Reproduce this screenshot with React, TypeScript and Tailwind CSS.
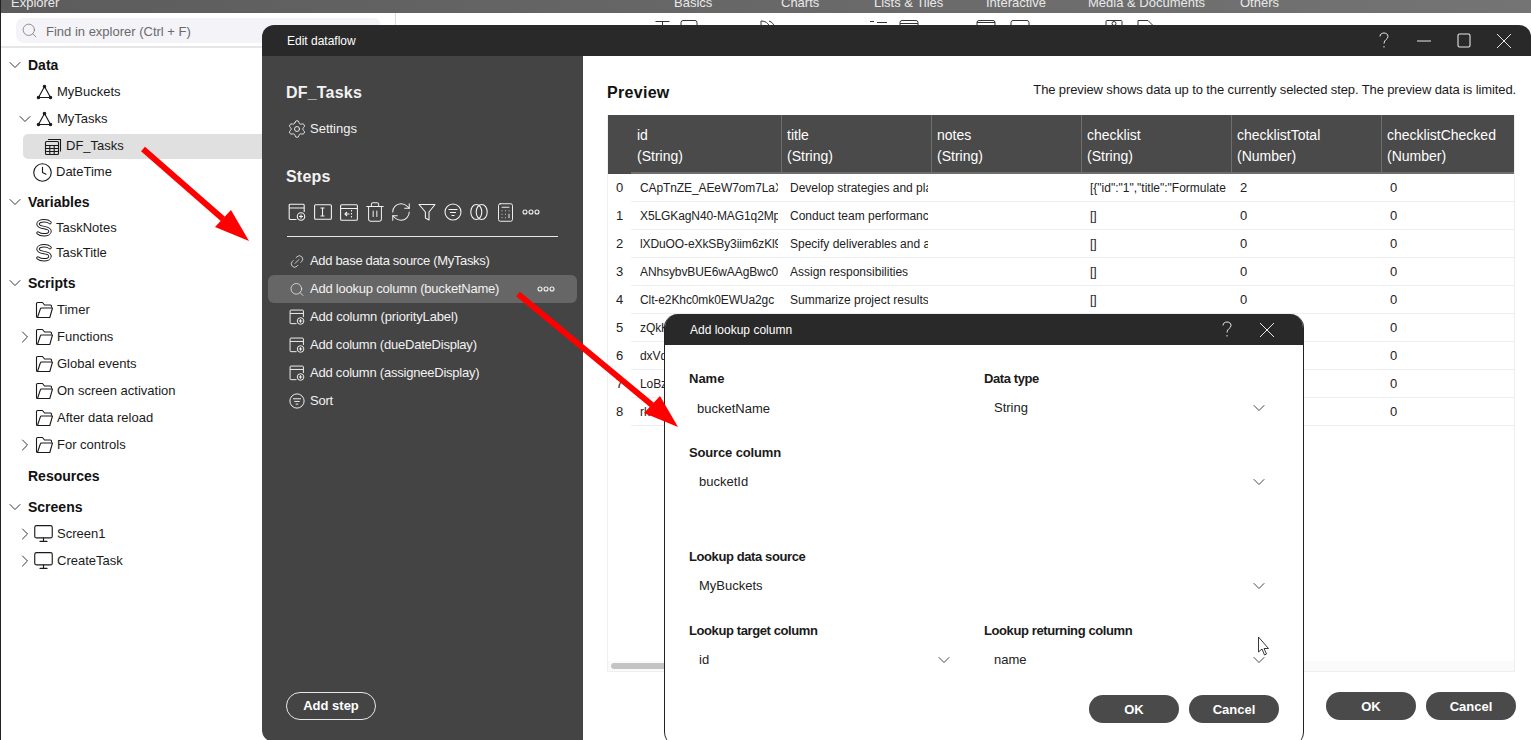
import React from 'react';
import { ChevronDown, ChevronRight, Clock, Monitor, Search, Settings, Link2, Trash2, RefreshCw, Calculator } from 'lucide-react';

const font = { fontFamily: '"Liberation Sans", Arial, sans-serif' };

// --- iconos dibujados a mano ---
const NetworkIcon = () => (
  <svg width="17" height="16" viewBox="0 0 17 16" fill="none" stroke="#1a1a1a" strokeWidth="1.1">
    <path d="M8.5 2.5 2.5 13.5h12z" />
    <circle cx="8.5" cy="2.5" r="1.2" fill="#1a1a1a" />
    <circle cx="2.5" cy="13.5" r="1.2" fill="#1a1a1a" />
    <circle cx="14.5" cy="13.5" r="1.2" fill="#1a1a1a" />
  </svg>
);

const TableIcon = () => (
  <svg width="18" height="18" viewBox="0 0 18 18" fill="none" stroke="#1a1a1a" strokeWidth="1.1">
    <path d="M4 1.5h12.5v12" />
    <rect x="1.5" y="3.5" width="13" height="13" rx="1" />
    <path d="M1.5 7.5h13M1.5 10.5h13M1.5 13.5h13M5.8 7.5v9M10.2 7.5v9" />
  </svg>
);

const VariableIcon = () => (
  <svg width="18" height="18" viewBox="0 0 18 18" fill="none" strokeLinecap="round">
    <path d="M15 3.6C13.6 2.2 11.4 1.8 9 1.8 5.4 1.8 3 3 3 5s2.4 3 6 3.6 6 1.6 6 3.6-2.4 3.6-6 3.6c-2.6 0-4.6-.5-6-1.8" stroke="#1a1a1a" strokeWidth="3.4" />
    <path d="M15 3.6C13.6 2.2 11.4 1.8 9 1.8 5.4 1.8 3 3 3 5s2.4 3 6 3.6 6 1.6 6 3.6-2.4 3.6-6 3.6c-2.6 0-4.6-.5-6-1.8" stroke="#fff" strokeWidth="1.5" />
  </svg>
);

const FolderIcon = () => (
  <svg width="19" height="18" viewBox="0 0 19 18" fill="none" stroke="#1a1a1a" strokeWidth="1.1" strokeLinejoin="round">
    <path d="M2.5 16.5c-.6 0-1-.4-1-1V2.5c0-.6.4-1 1-1h5l2 2.5h6c.6 0 1 .4 1 1v1.5" />
    <path d="M2.5 16.5h12.3L17.5 7H6.5c-.6 0-1 .3-1.2 1z" />
  </svg>
);

const AddColumnIcon = ({ size = 18 }: { size?: number }) => (
  <svg width={size} height={size} viewBox="0 0 18 18" fill="none" stroke="#f2f2f2" strokeWidth="1.1">
    <path d="M8.5 16.5H2.2c-.6 0-1-.4-1-1V2.2c0-.6.4-1 1-1h13c.6 0 1 .4 1 1V9" />
    <path d="M1.2 5h15" />
    <circle cx="13" cy="13.5" r="3.7" />
    <path d="M13 11.5v4M11 13.5h4" />
  </svg>
);

const RenameIcon = () => (
  <svg width="18" height="16" viewBox="0 0 18 16" fill="none" stroke="#f2f2f2" strokeWidth="1.1">
    <rect x="0.6" y="0.8" width="16.8" height="14.4" rx="1" />
    <path d="M6.5 4h4M6.5 12h4M8.5 4v8" />
  </svg>
);

const MoveIcon = () => (
  <svg width="18" height="17" viewBox="0 0 18 17" fill="none" stroke="#f2f2f2" strokeWidth="1.1">
    <rect x="0.6" y="0.8" width="16.8" height="15.4" rx="1" />
    <path d="M0.6 4.5h16.8M11.5 6v1.5M11.5 9v1.5M11.5 12v1.5M9.5 10H5M7 8l-2 2 2 2" />
  </svg>
);

const FunnelIcon = () => (
  <svg width="18" height="18" viewBox="0 0 18 18" fill="none" stroke="#f2f2f2" strokeWidth="1.1" strokeLinejoin="round">
    <path d="M1 1.5h16L11 9v8l-3.600-2V9z" />
  </svg>
);

const SortIcon = ({ size = 18 }: { size?: number }) => (
  <svg width={size} height={size} viewBox="0 0 18 18" fill="none" stroke="#f2f2f2" strokeWidth="1.1">
    <circle cx="9" cy="9" r="8" />
    <path d="M4.500 6.500h9M6 9.500h6M7.500 12.500h3" />
  </svg>
);

const MergeIcon = () => (
  <svg width="18" height="18" viewBox="0 0 18 18" fill="none" stroke="#f2f2f2" strokeWidth="1.1">
    <ellipse cx="6.300" cy="9" rx="5.500" ry="7.500" />
    <ellipse cx="11.700" cy="9" rx="5.500" ry="7.500" />
  </svg>
);

const Dots = () => (
  <svg width="18" height="6" viewBox="0 0 18 6" fill="none" stroke="#f2f2f2" strokeWidth="1.1">
    <circle cx="3" cy="3" r="2" />
    <circle cx="9" cy="3" r="2" />
    <circle cx="15" cy="3" r="2" />
  </svg>
);

const HelpIcon = () => (
  <svg width="10" height="17" viewBox="0 0 10 17" fill="none" stroke="#e8e8e8" strokeWidth="1">
    <path d="M1 4.500C1 2.300 2.700 1 5 1s4 1.300 4 3.400c0 3.100-4 3.100-4 7.100" />
    <path d="M5 14v1.500" />
  </svg>
);

const CloseIcon = () => (
  <svg width="16" height="16" viewBox="0 0 16 16" fill="none" stroke="#e8e8e8" strokeWidth="1">
    <path d="M1 1l14 14M15 1 1 15" />
  </svg>
);

const MinimizeIcon = () => (
  <svg width="14" height="2" viewBox="0 0 14 2" fill="none" stroke="#e8e8e8" strokeWidth="1">
    <path d="M0 1h14" />
  </svg>
);

const MaximizeIcon = () => (
  <svg width="14" height="15" viewBox="0 0 14 15" fill="none" stroke="#e8e8e8" strokeWidth="1.1">
    <rect x="1" y="1" width="12" height="13" rx="1.500" />
  </svg>
);

// --- arbol del explorador ---
const Section = ({ label, open = true, h = 'h-[26px]' }: { label: string; open?: boolean; h?: string }) => (
  <div className={`flex items-center ${h}`}>
    <span className="w-[27px] pl-[4px] shrink-0">
      {open && <ChevronDown size={20} strokeWidth={1.1} color="#222" />}
    </span>
    <span className="text-[14px] font-bold text-[#111]">{label}</span>
  </div>
);

const Item = ({ icon, label, chevron, open, h = 'h-[27px]', pad = 'pl-[34px] gap-[3px]' }: { icon: React.ReactNode; label: string; chevron?: boolean; open?: boolean; h?: string; pad?: string }) => (
  <div className={`relative flex items-center text-[13px] text-[#1a1a1a] ${h} ${pad}`}>
    {chevron && (
      <span className="absolute left-[14px] top-1/2 -translate-y-1/2">
        {open ? <ChevronDown size={20} strokeWidth={1.1} color="#222" /> : <ChevronRight size={20} strokeWidth={1.1} color="#222" />}
      </span>
    )}
    {icon}
    <span>{label}</span>
  </div>
);

const Sidebar = () => (
  <aside className="w-[396px] shrink-0 border-r border-[#dcdcdc] border-l border-l-[#222] flex flex-col">
    <div className="h-[35px] shrink-0 border-b-2 border-[#e6e6e6] pl-[15px] pr-[14px] pt-[5px]">
      <div className="h-[25px] bg-[#f3f3f8] rounded-[8px] flex items-center pl-[5px] gap-[8px] text-[13px] text-[#6a6a6a]">
        <Search size={17} strokeWidth={1.1} color="#777" />
        <span className="pt-[2px]">Find in explorer (Ctrl + F)</span>
      </div>
    </div>
    <div className="pt-[4px]">
      <Section label="Data" />
      <Item icon={<NetworkIcon />} label="MyBuckets" h="h-[26px] mt-px" pad="pl-[35px] gap-[4px]" />
      <Item icon={<NetworkIcon />} label="MyTasks" chevron open pad="pl-[35px] gap-[4px]" />
      <div className="ml-[22px] h-[25px] mt-[2px] bg-[#e0e0e0] rounded-l-[5px] flex items-center pl-[21px] gap-[4px] text-[13px] text-[#1a1a1a]">
        <TableIcon />
        <span className="pb-px">DF_Tasks</span>
      </div>
      <Item icon={<Clock size={21} strokeWidth={1.3} color="#1a1a1a" />} label="DateTime" pad="pl-[31px] gap-[3px]" h="h-[26px]" />
      <Section label="Variables" h="h-[26px] mt-[4px]" />
      <Item icon={<VariableIcon />} label="TaskNotes" h="h-[25px]" pad="pl-[34px] gap-[3px]" />
      <Item icon={<VariableIcon />} label="TaskTitle" h="h-[25px]" pad="pl-[34px] gap-[3px]" />
      <Section label="Scripts" h="h-[26px] mt-[5px]" />
      <Item icon={<FolderIcon />} label="Timer" pad="pl-[34px] gap-[3px]" />
      <Item icon={<FolderIcon />} label="Functions" chevron />
      <Item icon={<FolderIcon />} label="Global events" />
      <Item icon={<FolderIcon />} label="On screen activation" />
      <Item icon={<FolderIcon />} label="After data reload" />
      <Item icon={<FolderIcon />} label="For controls" chevron />
      <Section label="Resources" open={false} h="h-[26px] mt-[5px]" />
      <Section label="Screens" h="h-[26px] mt-[5px]" />
      <Item icon={<Monitor size={21} strokeWidth={1.3} color="#1a1a1a" />} label="Screen1" chevron pad="pl-[32px] gap-[3px]" />
      <Item icon={<Monitor size={21} strokeWidth={1.3} color="#1a1a1a" />} label="CreateTask" chevron pad="pl-[32px] gap-[3px]" />
    </div>
  </aside>
);

// --- barra superior ---
const TopBar = () => (
  <div className="h-[13px] shrink-0 overflow-hidden bg-gradient-to-r from-[#5c5c5c] to-[#747474] text-[13px] text-[#e9e9e9] border-l border-[#222]">
    <div className="flex h-[20px] -mt-[7px] items-center">
      <span className="ml-[10px] w-[663px]">Explorer</span>
      <span className="w-[107px]">Basics</span>
      <span className="w-[93px]">Charts</span>
      <span className="w-[112px]">Lists &amp; Tiles</span>
      <span className="w-[102px]">Interactive</span>
      <span className="w-[152px]">Media &amp; Documents</span>
      <span>Others</span>
    </div>
  </div>
);

const Ribbon = () => (
  <div className="flex-1 overflow-hidden">
    <div className="flex pl-[259px] pt-[7px] gap-[6px]">
      <svg width="500" height="18" viewBox="0 0 500 18" fill="none" stroke="#333" strokeWidth="1">
        <path d="M0.500 1.500h14M7.500 1.500v14" />
        <rect x="26" y="0.500" width="16" height="16" rx="2" />
        <path d="M106 16V1c6 0 9 4 9 9" />
        <path d="M114 1c3 1 5 3 5 6" />
        <path d="M215 1.500h4M222 2.500h10" />
        <rect x="245" y="0.500" width="18" height="16" rx="2" />
        <path d="M245 3.500h18" />
        <rect x="322" y="0.500" width="18" height="16" rx="2" />
        <path d="M322 2.500h18" />
        <rect x="356" y="0.500" width="18" height="16" rx="2" />
        <rect x="451" y="0.500" width="16" height="16" rx="1" />
        <circle cx="459" cy="3.500" r="2" />
        <path d="M483 16V0.500h10l5 5v10" />
      </svg>
    </div>
  </div>
);

// --- tabla de vista previa ---
const columns = [
  ['id', '(String)'],
  ['title', '(String)'],
  ['notes', '(String)'],
  ['checklist', '(String)'],
  ['checklistTotal', '(Number)'],
  ['checklistChecked', '(Number)'],
];

const rows = [
  ['CApTnZE_AEeW7om7LaX', 'Develop strategies and plans', '[{"id":"1","title":"Formulate', '2'],
  ['X5LGKagN40-MAG1q2MpQ', 'Conduct team performance', '[]', '0'],
  ['lXDuOO-eXkSBy3iim6zKl9', 'Specify deliverables and a', '[]', '0'],
  ['ANhsybvBUE6wAAgBwc0Q', 'Assign responsibilities', '[]', '0'],
  ['Clt-e2Khc0mk0EWUa2gc', 'Summarize project results', '[]', '0'],
  ['zQkKagN40', 'Create project plan', '[]', '0'],
  ['dxVdOO', 'Define goals', '[]', '0'],
  ['LoBzyb', 'Review budget', '[]', '0'],
  ['rkE2Kh', 'Schedule meeting', '[]', '0'],
];

const Cell = ({ children }: { children?: React.ReactNode }) => (
  <div className="h-[28px] border-b border-[#eeeeee] flex items-center pl-[9px] pr-[3px] overflow-hidden whitespace-nowrap">
    <span className="overflow-hidden">{children}</span>
  </div>
);

const PreviewTable = () => (
  <div className="w-[908px] h-[557px] border-x border-b border-[#efefef] flex flex-col overflow-hidden">
    <div className="grid grid-cols-[23px_150px_150px_150px_150px_150px_150px] h-[59px] bg-[#4a4a4a] text-white text-[14px] leading-[21px] shrink-0">
      <div />
      {columns.map(([name, type], i) => (
        <div key={name} className={`border-b-2 border-b-[#6e6e6e] pt-[10px] whitespace-nowrap ${i === 0 ? 'pl-[6px]' : 'border-l border-[#6e6e6e] pl-[5px]'}`}>
          <div>{name}</div>
          <div>{type}</div>
        </div>
      ))}
    </div>
    <div className="flex-1 text-[12px] text-[#222]">
      {rows.map((r, i) => (
        <div key={i} className="grid grid-cols-[23px_150px_150px_150px_150px_150px_150px]">
          <div className="h-[28px] flex items-center justify-center text-[13px]">{i}</div>
          <Cell><span className="tracking-[-0.1px]">{r[0]}</span></Cell>
          <Cell>{r[1]}</Cell>
          <Cell />
          <Cell>{r[2]}</Cell>
          <Cell><span className="text-[13px]">{r[3]}</span></Cell>
          <Cell><span className="text-[13px]">0</span></Cell>
        </div>
      ))}
    </div>
    <div className="h-[10px] bg-[#fafafa] shrink-0 pl-[3px] pt-[2px]">
      <div className="w-[120px] h-[6px] rounded-full bg-[#c4c4c4]" />
    </div>
  </div>
);

const DialogButton = ({ children }: { children: React.ReactNode }) => (
  <button className="w-[90px] h-[28px] pt-px rounded-[14px] bg-[#4a4a4a] text-white text-[13px] font-bold">{children}</button>
);

const HeaderCell = ({ children }: { children: React.ReactNode }) => (
  <span className="w-[40px] flex items-center justify-center">{children}</span>
);

const StepRow = ({ icon, label, active, track = 'tracking-[-0.22px]' }: { icon: React.ReactNode; label: string; active?: boolean; track?: string }) => (
  <div className={`h-[28px] rounded-[6px] flex items-center pl-[21px] gap-[5px] ${active ? 'bg-[#666666]' : ''}`}>
    <span className="w-[16px] flex justify-center">{icon}</span>
    <span className={`flex-1 ${track}`}>{label}</span>
    {active && <span className="pr-[22px]"><Dots /></span>}
  </div>
);

const ToolCell = ({ children }: { children: React.ReactNode }) => (
  <span className="w-[26px] flex justify-center">{children}</span>
);

// --- dialogo principal ---
const EditDataflow = () => (
  <div className="absolute left-[262px] top-[25px] right-0 h-[717px] rounded-[12px] overflow-hidden flex flex-col bg-white">
    <div className="h-[31px] shrink-0 bg-[#292929] flex items-center text-white text-[12px]">
      <span className="ml-[25px] flex-1">Edit dataflow</span>
      <span className="flex items-center pr-[7px]">
        <HeaderCell><HelpIcon /></HeaderCell>
        <HeaderCell><MinimizeIcon /></HeaderCell>
        <HeaderCell><MaximizeIcon /></HeaderCell>
        <HeaderCell><CloseIcon /></HeaderCell>
      </span>
    </div>
    <div className="flex-1 flex min-h-0">
      <div className="w-[321px] shrink-0 bg-[#444444] text-[#f2f2f2] flex flex-col">
        <div className="pl-[24px] pt-[25px]">
          <div className="h-[24px] flex items-center text-[16px] font-bold tracking-[0.2px]">DF_Tasks</div>
          <div className="h-[24px] mt-[12px] flex items-center gap-[3px] text-[13px] pl-[1px]">
            <Settings size={20} strokeWidth={1.1} />
            <span>Settings</span>
          </div>
          <div className="h-[24px] mt-[24px] flex items-center text-[16px] font-bold tracking-[0.2px]">Steps</div>
          <div className="h-[24px] mt-[11px] flex items-center -ml-[2px]">
            <ToolCell><AddColumnIcon /></ToolCell>
            <ToolCell><RenameIcon /></ToolCell>
            <ToolCell><MoveIcon /></ToolCell>
            <ToolCell><Trash2 size={22} strokeWidth={1.1} /></ToolCell>
            <ToolCell><RefreshCw size={22} strokeWidth={1.1} /></ToolCell>
            <ToolCell><FunnelIcon /></ToolCell>
            <ToolCell><SortIcon /></ToolCell>
            <ToolCell><MergeIcon /></ToolCell>
            <ToolCell><Calculator size={21} strokeWidth={1.1} /></ToolCell>
            <ToolCell><Dots /></ToolCell>
          </div>
          <div className="w-[271px] h-px bg-[#e8e8e8] mt-[12px] ml-px" />
        </div>
        <div className="mx-[6px] mt-[10px] text-[13px]">
          <StepRow icon={<Link2 size={19} strokeWidth={1.1} className="-rotate-45" />} label="Add base data source (MyTasks)" track="tracking-[-0.33px]" />
          <StepRow icon={<Search size={21} strokeWidth={1.1} />} label="Add lookup column (bucketName)" active />
          <StepRow icon={<AddColumnIcon size={16} />} label="Add column (priorityLabel)" track="tracking-[-0.15px]" />
          <StepRow icon={<AddColumnIcon size={16} />} label="Add column (dueDateDisplay)" />
          <StepRow icon={<AddColumnIcon size={16} />} label="Add column (assigneeDisplay)" />
          <StepRow icon={<SortIcon size={16} />} label="Sort" />
        </div>
        <button className="mt-auto mb-[22px] ml-[24px] w-[90px] h-[28px] rounded-full border border-[#e8e8e8] text-[13px] font-bold text-white">Add step</button>
      </div>
      <div className="flex-1 flex flex-col pl-[24px]">
        <div className="h-[59px] shrink-0 flex items-start justify-between pr-[15px] pt-[25px]">
          <span className="text-[16px] font-bold text-[#111] leading-[24px] tracking-[0.3px]">Preview</span>
          <span className="text-[13px] text-[#1a1a1a] leading-[18px] tracking-[-0.115px]">The preview shows data up to the currently selected step. The preview data is limited.</span>
        </div>
        <PreviewTable />
        <div className="mt-[20px] flex justify-end gap-[10px] pr-[15px]">
          <DialogButton>OK</DialogButton>
          <DialogButton>Cancel</DialogButton>
        </div>
      </div>
    </div>
  </div>
);

// --- dialogo de columna de busqueda ---
const Label = ({ children, track = 'tracking-[-0.4px]' }: { children: React.ReactNode; track?: string }) => (
  <div className={`h-[20px] flex items-center text-[13px] font-bold text-[#1a1a1a] ${track}`}>{children}</div>
);

const Value = ({ children, chevron = true, pad = 'pl-[10px]' }: { children: React.ReactNode; chevron?: boolean; pad?: string }) => (
  <div className={`h-[38px] flex items-center justify-between text-[13px] text-[#222] ${pad}`}>
    <span>{children}</span>
    {chevron && <ChevronDown size={20} strokeWidth={1.1} color="#333" className="-mr-[4px]" />}
  </div>
);

const LookupDialog = () => (
  <div className="absolute left-[664px] top-[314px] w-[640px] h-[432px] rounded-[14px] overflow-hidden bg-white border-x border-[#222] flex flex-col">
    <div className="h-[31px] shrink-0 bg-[#292929] flex items-center text-white text-[12px]">
      <span className="ml-[25px] flex-1">Add lookup column</span>
      <span className="flex items-center pr-[16px]">
        <HeaderCell><HelpIcon /></HeaderCell>
        <HeaderCell><CloseIcon /></HeaderCell>
      </span>
    </div>
    <div className="pl-[24px] pr-[24px] pt-[24px] flex-1">
      <div className="grid grid-cols-[295px_281px]">
        <div>
          <Label track="tracking-normal">Name</Label>
          <Value chevron={false} pad="pl-[8px] pt-[2px]">bucketName</Value>
        </div>
        <div>
          <Label track="tracking-[-0.4px]">Data type</Label>
          <Value>String</Value>
        </div>
      </div>
      <div className="w-[576px] mt-[16px]">
        <Label track="tracking-[-0.15px]">Source column</Label>
        <Value>bucketId</Value>
      </div>
      <div className="w-[576px] mt-[46px]">
        <Label>Lookup data source</Label>
        <Value>MyBuckets</Value>
      </div>
      <div className="grid grid-cols-[295px_281px] mt-[16px]">
        <div className="w-[261px]">
          <Label>Lookup target column</Label>
          <Value>id</Value>
        </div>
        <div>
          <Label>Lookup returning column</Label>
          <Value>name</Value>
        </div>
      </div>
      <div className="mt-[16px] flex justify-end gap-[10px]">
        <DialogButton>OK</DialogButton>
        <DialogButton>Cancel</DialogButton>
      </div>
    </div>
  </div>
);

// --- flechas rojas y cursor sobre la captura ---
const Annotations = () => (
  <svg className="absolute inset-0 pointer-events-none" width="1531" height="740" viewBox="0 0 1531 740" fill="none">
    <path d="M143 149 223 219" stroke="#ff0000" strokeWidth="6" />
    <path d="M249 241 231 210 215 227z" fill="#ff0000" />
    <path d="M518 294 652 405" stroke="#ff0000" strokeWidth="6" />
    <path d="M678 427 660 396 644 413z" fill="#ff0000" />
    <path d="M1258.500 637v15l3.500-3 2.500 6 2-1-2.500-5.500h4.500z" fill="#fff" stroke="#222" strokeWidth="0.900" strokeLinejoin="round" />
  </svg>
);

export default function App() {
  return (
    <div className="relative w-[1531px] h-[740px] overflow-hidden bg-white flex flex-col" style={font}>
      <TopBar />
      <div className="flex-1 flex min-h-0">
        <Sidebar />
        <Ribbon />
      </div>
      <EditDataflow />
      <LookupDialog />
      <Annotations />
    </div>
  );
}
